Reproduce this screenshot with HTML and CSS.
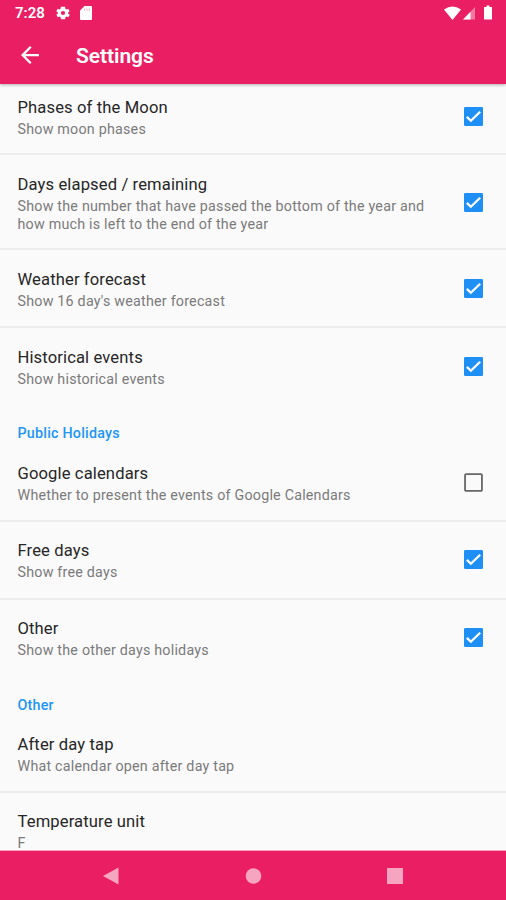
FILE: index.html
```html
<!DOCTYPE html>
<html lang="en">
<head>
<meta charset="utf-8">
<title>Settings</title>
<link rel="stylesheet" href="styles.css">
</head>
<body>
<div class="screen">
  <header class="top">
    <div class="status">
      <span class="time">7:28</span>
      <svg class="gear" viewBox="2 2 20 20"><path fill="#fff" fill-rule="evenodd" d="M19.4 13a7.500 7.500 0 0 0 0-2l2.100-1.600-2-3.500-2.500 1a8 8 0 0 0-1.700-1L15 3H9l-.4 2.900a8 8 0 0 0-1.700 1l-2.500-1-2 3.500L4.600 11a7.500 7.500 0 0 0 0 2l-2.100 1.600 2 3.500 2.500-1a8 8 0 0 0 1.700 1L9 21h6l.4-2.900a8 8 0 0 0 1.700-1l2.500 1 2-3.500zM12 15a3 3 0 1 1 0-6 3 3 0 0 1 0 6z"/></svg>
      <svg class="sd" viewBox="0 0 12 14"><path fill="#fff" d="M4.500 0H11q1 0 1 1v12q0 1-1 1H1q-1 0-1-1V4.500z"/><path fill="#e91e63" opacity=".3" d="M4 2.500v2.300h1.200V2.500zm2.400 0v2.300h1.200V2.500zm2.400 0v2.300H10V2.500z"/></svg>
      <svg class="signals" viewBox="0 0 50 16"><path fill="#fff" d="M0 4.500Q8.500-1.500 17 4.500L8.500 15z"/><path fill="#fff" opacity=".4" d="M31 2v12.500H19z"/><path fill="#fff" d="M26.500 6.700v7.800H19z"/><path fill="#fff" d="M42.500 2V.5h3V2H48v12.500h-8V2z"/></svg>
    </div>
    <div class="appbar">
      <svg class="back" viewBox="4 4 16 16"><path fill="#fff" d="M20 11H7.830l5.590-5.590L12 4l-8 8 8 8 1.410-1.410L7.830 13H20z"/></svg>
      <h1>Settings</h1>
    </div>
  </header>
  <main class="list">
    <section class="row first"><div class="copy"><h2>Phases of the Moon</h2><p>Show moon phases</p></div><svg class="check" viewBox="0 0 18 18"><use href="#checked"/></svg></section>
    <section class="row tall"><div class="copy"><h2>Days elapsed / remaining</h2><p>Show the number that have passed the bottom of the year and<br>how much is left to the end of the year</p></div><svg class="check" viewBox="0 0 18 18"><use href="#checked"/></svg></section>
    <section class="row low"><div class="copy"><h2>Weather forecast</h2><p>Show 16 day's weather forecast</p></div><svg class="check" viewBox="0 0 18 18"><use href="#checked"/></svg></section>
    <section class="row low last"><div class="copy"><h2>Historical events</h2><p>Show historical events</p></div><svg class="check" viewBox="0 0 18 18"><use href="#checked"/></svg></section>
    <h3>Public Holidays</h3>
    <section class="row low"><div class="copy"><h2>Google calendars</h2><p>Whether to present the events of Google Calendars</p></div><svg class="check" viewBox="0 0 18 18"><rect x="1" y="1" width="16" height="16" rx="1" fill="none" stroke="#666" stroke-width="1.700"/></svg></section>
    <section class="row"><div class="copy"><h2>Free days</h2><p>Show free days</p></div><svg class="check" viewBox="0 0 18 18"><use href="#checked"/></svg></section>
    <section class="row last"><div class="copy"><h2>Other</h2><p>Show the other days holidays</p></div><svg class="check" viewBox="0 0 18 18"><use href="#checked"/></svg></section>
    <h3>Other</h3>
    <section class="row short"><div class="copy"><h2>After day tap</h2><p>What calendar open after day tap</p></div></section>
    <section class="row last"><div class="copy"><h2>Temperature unit</h2><p>F</p></div></section>
  </main>
  <nav class="nav">
    <svg viewBox="0 0 18 18"><path d="M16.500 .5v17L1 9z"/></svg>
    <svg viewBox="0 0 18 18"><circle cx="9.500" cy="9" r="7.800"/></svg>
    <svg viewBox="0 0 18 18"><rect x="1" y="1" width="16" height="16"/></svg>
  </nav>
</div>
<svg class="defs"><defs><g id="checked"><rect width="18" height="18" rx="1.200" fill="#1e90f5"/><path d="M2.700 9.300 6.500 13l8.800-8.500" fill="none" stroke="#fff" stroke-width="2.200"/></g></defs></svg>
</body>
</html>
```

FILE: styles.css
```css
* { box-sizing: border-box; }
body { margin: 0; font-family: Roboto, sans-serif; background: #fafafa; }
h1, h2, h3, p { margin: 0; }
svg { display: block; flex: none; }
.defs { position: absolute; width: 0; height: 0; }
.screen { height: 900px; display: flex; flex-direction: column; overflow: hidden; }
.top { height: 84px; flex: none; background: #e91e63; color: #fff; box-shadow: 0 1px 3px rgba(0,0,0,.3); z-index: 1; }
.status { height: 26px; display: flex; align-items: center; padding: 0 12px 0 15px; }
.time { font-size: 15px; font-weight: 600; width: 41px; }
.gear { width: 14px; height: 14px; }
.sd { width: 12px; height: 14px; margin-left: 10px; }
.signals { width: 50px; height: 16px; margin-left: auto; }
.appbar { height: 58px; display: flex; align-items: center; padding: 0 21px; }
.back { width: 18px; height: 18px; }
.appbar h1 { margin-left: 37px; padding-top: 2px; font-size: 21px; font-weight: 600; letter-spacing: -.05px; }
.list { flex: 1; min-height: 0; overflow: hidden; }
.row { height: 78px; display: flex; justify-content: space-between; padding: 18px 23.500px 0 17.500px; border-bottom: 2px solid #ededed; }
.row h2 { font-size: 16.600px; line-height: 22px; font-weight: 400; letter-spacing: .12px; color: #262626; }
.row p { font-size: 14.300px; line-height: 17.500px; margin-top: 2px; letter-spacing: .21px; color: #7a7a7a; }
.first { height: 71px; padding-top: 13px; }
.tall { height: 95px; padding-top: 19px; }
.low { padding-top: 19px; }
.check { width: 19px; height: 19px; margin-top: 10px; }
.first .check { margin-top: 9.500px; }
.tall .check { margin-top: 19px; }
.last { border-bottom-color: transparent; }
.short { height: 77px; }
h3 { height: 38px; padding: 17px 17.500px 0; font-size: 14.300px; line-height: 20px; font-weight: 500; letter-spacing: .22px; color: #2196f3; }
.nav { height: 49px; flex: none; background: #e91e63; box-shadow: 0 -1px 0 #f3a0bd; z-index: 1; display: flex; justify-content: space-between; align-items: center; padding: 0 102px; }
.nav svg { width: 18px; height: 18px; fill: #f6a5c1; }
```
